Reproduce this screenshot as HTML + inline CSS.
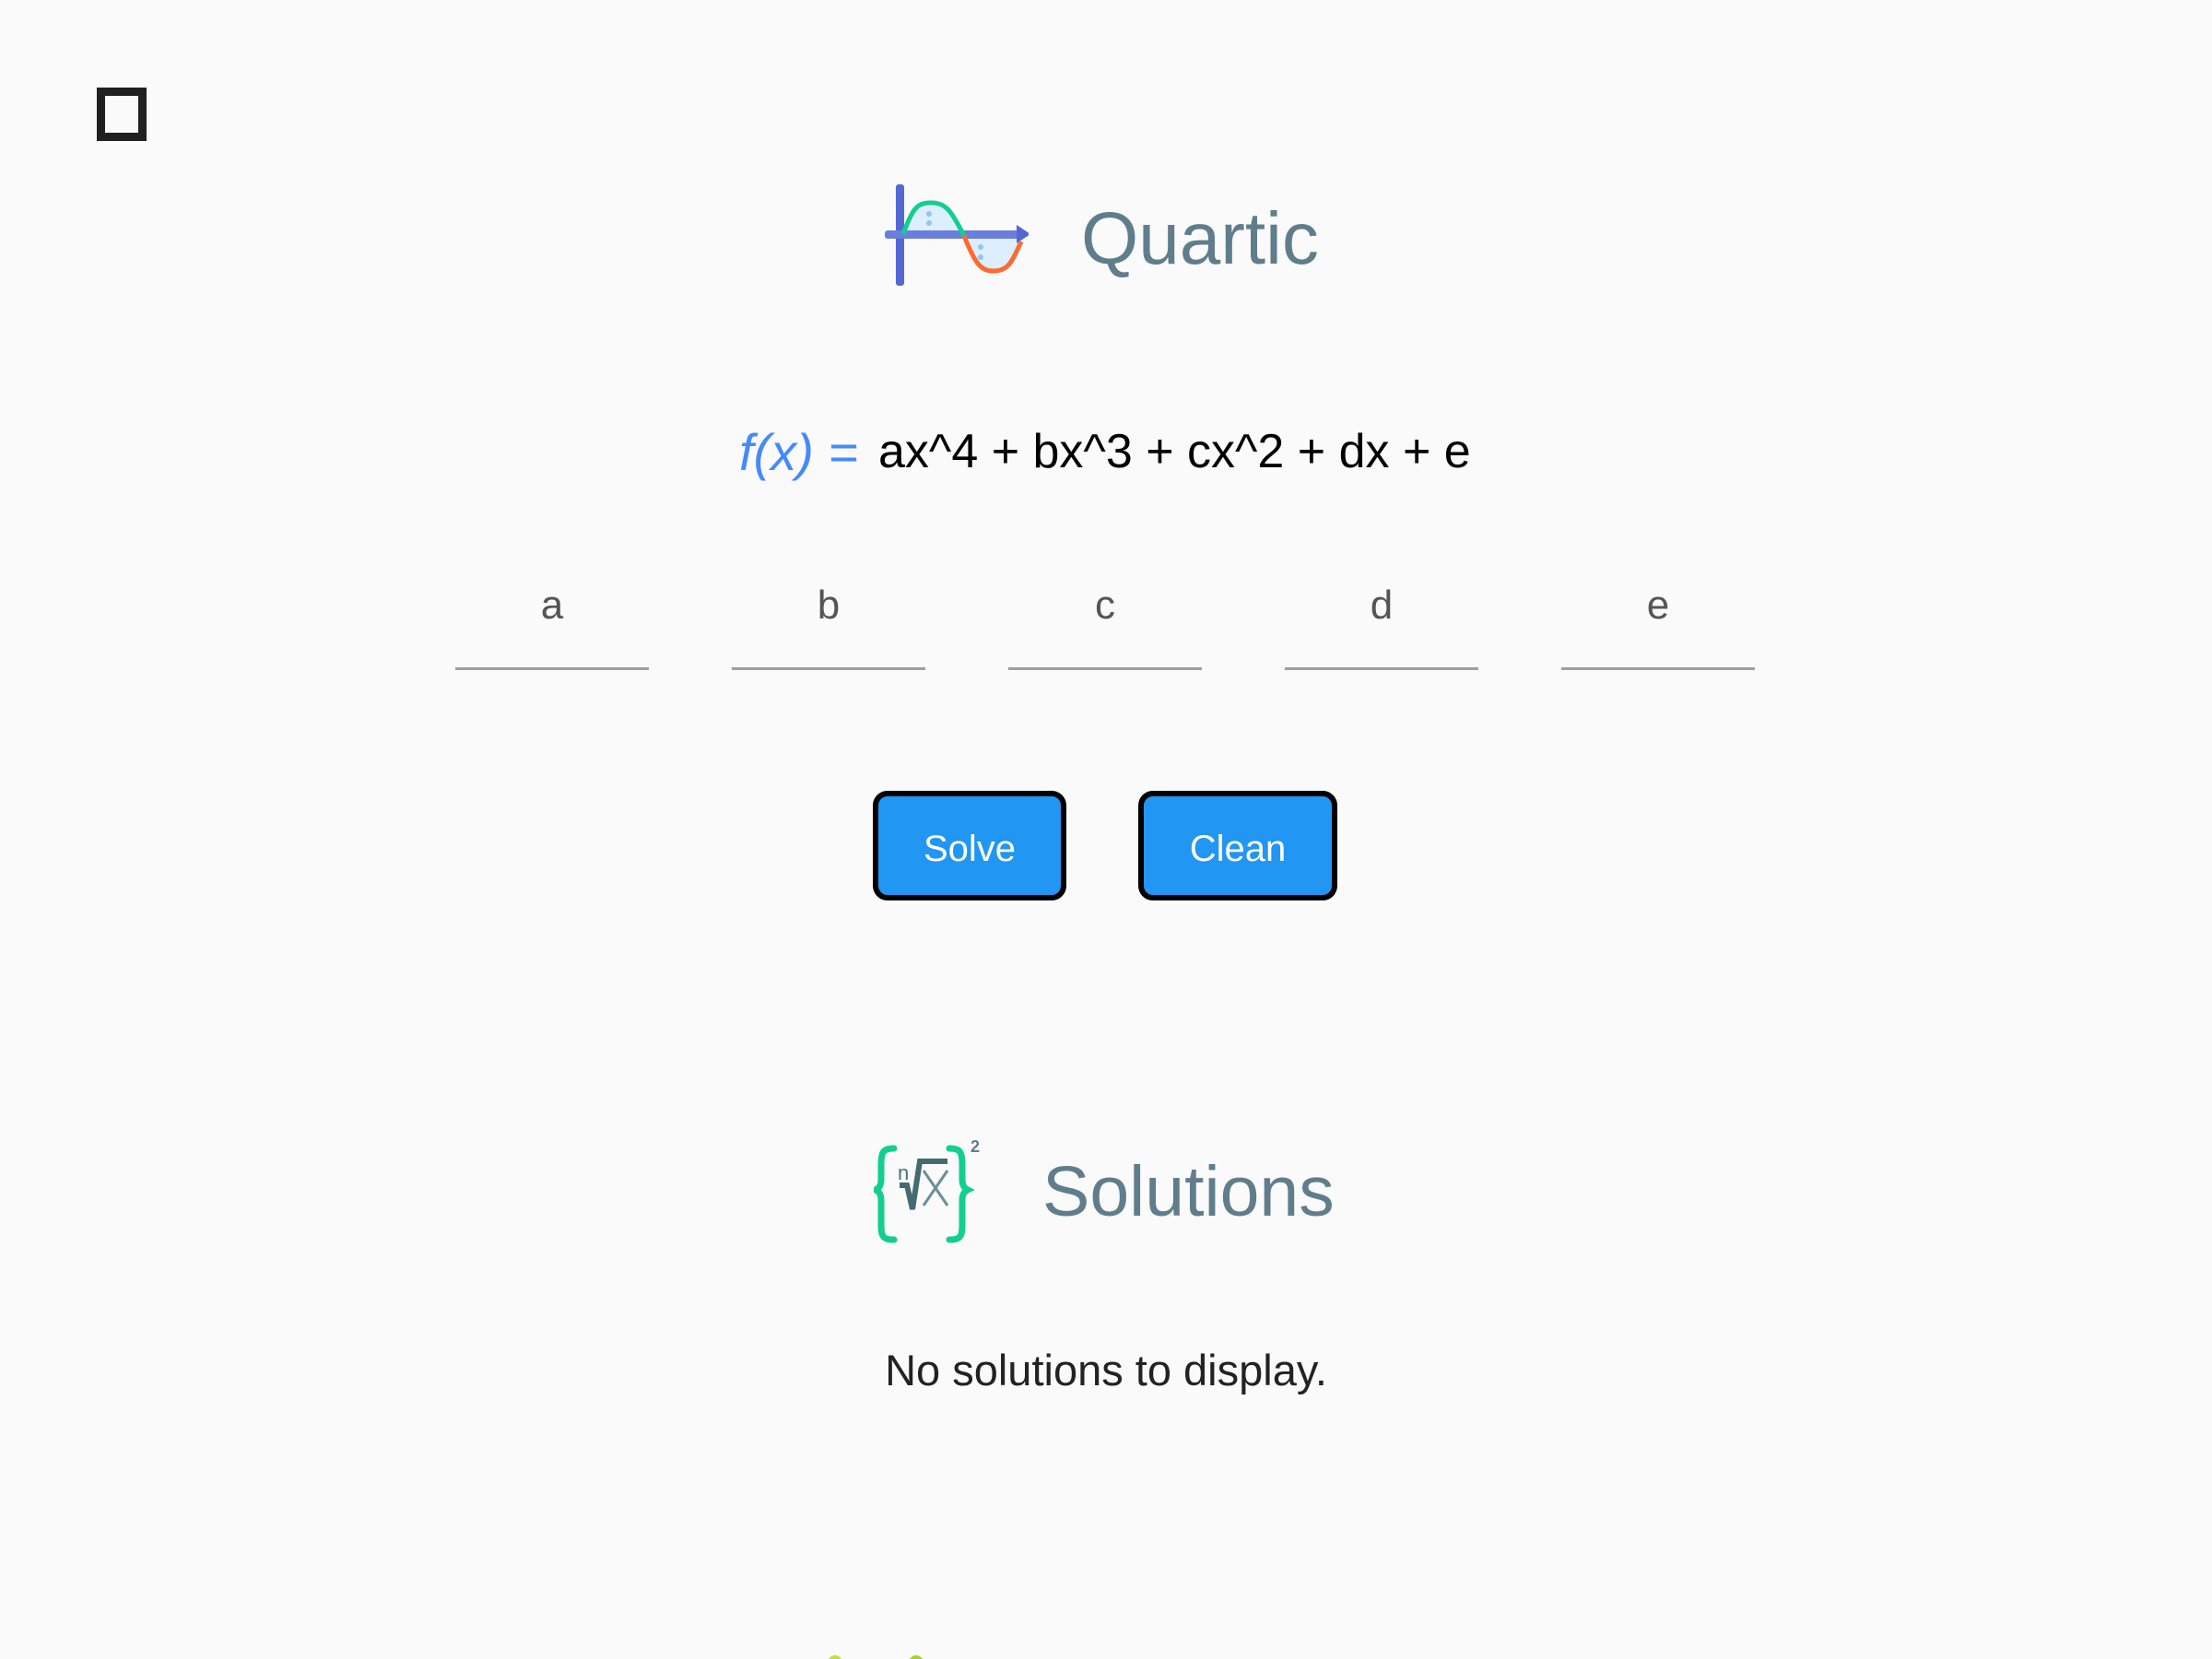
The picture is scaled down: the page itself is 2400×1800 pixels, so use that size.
<!DOCTYPE html>
<html><head><meta charset="utf-8"><style>
html,body{margin:0;padding:0;width:2400px;height:1800px;background:#fafafa;overflow:hidden;font-family:"Liberation Sans",sans-serif;position:relative}
.a{position:absolute}
.sq{left:105px;top:95px;width:36px;height:40px;border:9px solid #202020}
.title{color:#607d8b;font-size:80px;line-height:1;white-space:nowrap}
.lab{width:210px;text-align:center;font-size:44px;color:#555;top:632px}
.ul{width:210px;height:3px;background:#9e9e9e;top:724px}
.btn{box-sizing:border-box;border:6px solid #000;border-radius:16px;background:#2196f3;color:#fff;font-size:40px;display:flex;align-items:center;justify-content:center;top:858px;height:119px;padding-top:8px}
</style></head><body>
<div class="a sq"></div>
<svg class="a" style="left:960px;top:198px" width="156" height="114" viewBox="0 0 156 114">
<path d="M18 56 C28 28 34 22 50 22 C66 22 72 30 86 60 L86 56 Z" fill="#ddeefc"/>
<path d="M86 56 C98 88 104 96 118 96 C134 96 138 86 148 64 L148 56 Z" fill="#ddeefc"/>
<rect x="12" y="2" width="9" height="110" rx="3" fill="#5468d4"/>
<rect x="0" y="52" width="145" height="9" rx="3" fill="#6a7fdb"/>
<path d="M143 46 L158 56 L143 66 Z" fill="#5468d4"/>
<path d="M20 56 C30 28 35 22 50 22 C66 22 72 30 86 58" fill="none" stroke="#13cf8f" stroke-width="5"/>
<path d="M86 58 C98 88 104 96 118 96 C134 96 138 86 148 64" fill="none" stroke="#ff6a30" stroke-width="5"/>
<circle cx="48" cy="34" r="3" fill="#8cc6fa"/><circle cx="48" cy="44" r="3" fill="#8cc6fa"/>
<circle cx="104" cy="70" r="3" fill="#8cc6fa"/><circle cx="104" cy="81" r="3" fill="#8cc6fa"/>
</svg>
<div class="a title" style="left:1173px;top:219px">Quartic</div>
<div class="a" style="left:802px;top:458px;font-size:56px;color:#448aff;font-style:italic;white-space:nowrap">f(x) =</div>
<div class="a" style="left:953px;top:460px;font-size:52px;color:#000;white-space:nowrap">ax^4 + bx^3 + cx^2 + dx + e</div>
<div class="a lab" style="left:494px">a</div><div class="a ul" style="left:494px"></div>
<div class="a lab" style="left:794px">b</div><div class="a ul" style="left:794px"></div>
<div class="a lab" style="left:1094px">c</div><div class="a ul" style="left:1094px"></div>
<div class="a lab" style="left:1394px">d</div><div class="a ul" style="left:1394px"></div>
<div class="a lab" style="left:1694px">e</div><div class="a ul" style="left:1694px"></div>
<div class="a btn" style="left:947px;width:210px">Solve</div>
<div class="a btn" style="left:1235px;width:216px">Clean</div>
<svg class="a" style="left:948px;top:1230px" width="124" height="122" viewBox="0 0 124 122">
<path d="M22 16 C10 16 8 20 8 34 L8 50 C8 58 4 60 2 61 C4 62 8 64 8 72 L8 98 C8 112 10 115 22 115" fill="none" stroke="#13cf8f" stroke-width="7" stroke-linecap="round"/>
<path d="M82 16 C94 16 96 20 96 34 L96 50 C96 58 100 60 102 61 C100 62 96 64 96 72 L96 98 C96 112 94 115 82 115" fill="none" stroke="#13cf8f" stroke-width="7" stroke-linecap="round"/>
<text x="105" y="20" font-size="18" font-weight="bold" fill="#607d8b" font-family="Liberation Sans">2</text>
<text x="26" y="50" font-size="22" fill="#4a6f78" font-family="Liberation Sans">n</text>
<path d="M28 56 L36 56 L42 82 L50 30 L80 30" fill="none" stroke="#466a72" stroke-width="6"/>
<path d="M54 40 L80 78 M80 40 L54 78" stroke="#6b8f99" stroke-width="3"/>
</svg>
<div class="a title" style="left:1131px;top:1255px;font-size:77px">Solutions</div>
<div class="a" style="left:0;width:2400px;top:1459px;text-align:center;font-size:47px;color:#222">No solutions to display.</div>
<div class="a" style="left:898px;top:1796px;width:16px;height:16px;border-radius:50%;background:#c0e040"></div>
<div class="a" style="left:986px;top:1796px;width:16px;height:16px;border-radius:50%;background:#a8d030"></div>
</body></html>
